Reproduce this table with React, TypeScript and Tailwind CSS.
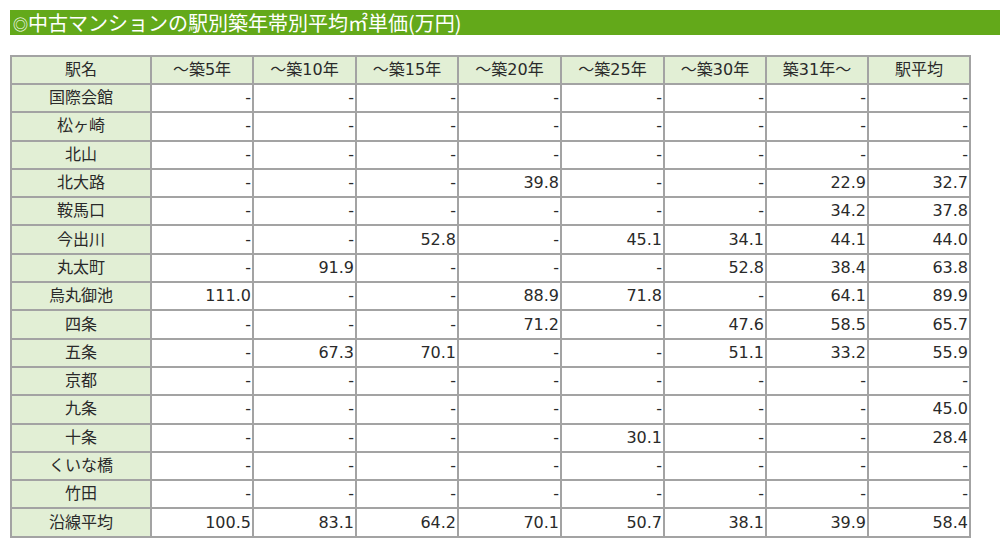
import React from "react";

const headers = ["駅名", "～築5年", "～築10年", "～築15年", "～築20年", "～築25年", "～築30年", "築31年～", "駅平均"];

const rows: [string, string[]][] = [
  ["国際会館", ["-", "-", "-", "-", "-", "-", "-", "-"]],
  ["松ヶ崎", ["-", "-", "-", "-", "-", "-", "-", "-"]],
  ["北山", ["-", "-", "-", "-", "-", "-", "-", "-"]],
  ["北大路", ["-", "-", "-", "39.8", "-", "-", "22.9", "32.7"]],
  ["鞍馬口", ["-", "-", "-", "-", "-", "-", "34.2", "37.8"]],
  ["今出川", ["-", "-", "52.8", "-", "45.1", "34.1", "44.1", "44.0"]],
  ["丸太町", ["-", "91.9", "-", "-", "-", "52.8", "38.4", "63.8"]],
  ["烏丸御池", ["111.0", "-", "-", "88.9", "71.8", "-", "64.1", "89.9"]],
  ["四条", ["-", "-", "-", "71.2", "-", "47.6", "58.5", "65.7"]],
  ["五条", ["-", "67.3", "70.1", "-", "-", "51.1", "33.2", "55.9"]],
  ["京都", ["-", "-", "-", "-", "-", "-", "-", "-"]],
  ["九条", ["-", "-", "-", "-", "-", "-", "-", "45.0"]],
  ["十条", ["-", "-", "-", "-", "30.1", "-", "-", "28.4"]],
  ["くいな橋", ["-", "-", "-", "-", "-", "-", "-", "-"]],
  ["竹田", ["-", "-", "-", "-", "-", "-", "-", "-"]],
  ["沿線平均", ["100.5", "83.1", "64.2", "70.1", "50.7", "38.1", "39.9", "58.4"]],
];

export default function App() {
  return (
    <div
      className="w-[1000px] h-[557px] overflow-hidden bg-white text-[#2a2a2a]"
      style={{ fontFamily: '"DejaVu Sans", "Noto Sans CJK JP", sans-serif' }}
    >
      <div className="pt-[10px] pl-[10px]">
        <div
          className="h-[25px] bg-[#63a91a] text-white text-[20px] leading-[25px] pl-[3px] whitespace-nowrap"
          style={{ fontFamily: '"Noto Sans CJK JP", sans-serif' }}
        >
          <span className="text-[15px] align-[1px]">◎</span>中古マンションの駅別築年帯別平均㎡単価(万円)
        </div>
      </div>
      <div className="pl-[10px] pt-[20px]">
        <table className="border-collapse w-[959px] table-fixed text-[16px]">
          <colgroup>
            <col className="w-[140px]" />
            <col className="w-[102px]" />
            <col className="w-[103px]" />
            <col className="w-[102px]" />
            <col className="w-[103px]" />
            <col className="w-[103px]" />
            <col className="w-[102px]" />
            <col className="w-[102px]" />
            <col className="w-[102px]" />
          </colgroup>
          <thead>
            <tr className="h-[28px]">
              {headers.map((h) => (
                <th key={h} className="border-2 border-[#a3a3a3] bg-[#e2efd5] font-normal text-center p-0 leading-[24px]">
                  {h}
                </th>
              ))}
            </tr>
          </thead>
          <tbody>
            {rows.map(([name, vals]) => (
              <tr key={name} className="h-[28.3px]">
                <td className="border-2 border-[#a3a3a3] bg-[#e2efd5] text-center p-0 leading-[24px]">{name}</td>
                {vals.map((v, i) => (
                  <td key={i} className="border-2 border-[#a3a3a3] text-right pr-[1px] p-0 leading-[24px]">
                    {v}
                  </td>
                ))}
              </tr>
            ))}
          </tbody>
        </table>
      </div>
    </div>
  );
}
